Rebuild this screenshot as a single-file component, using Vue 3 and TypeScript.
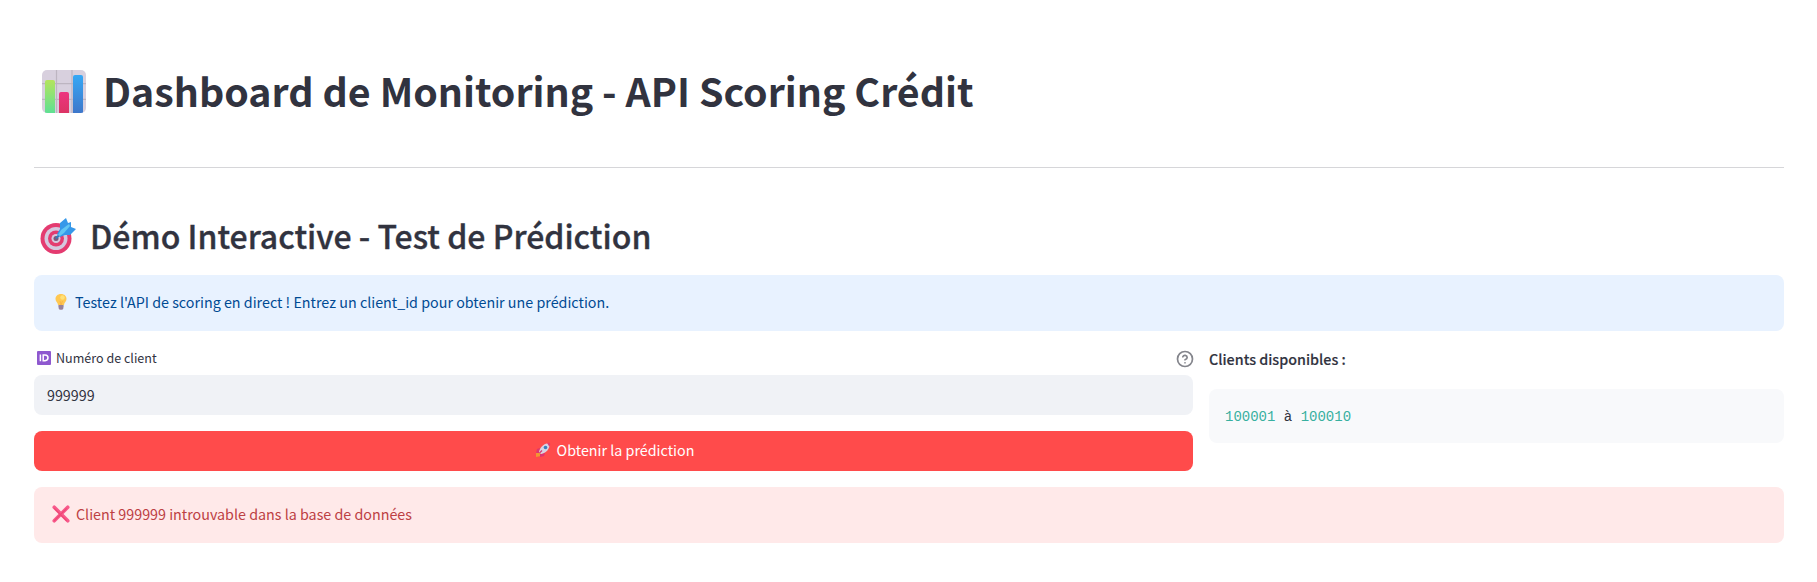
<script setup lang="ts">
import { ref } from 'vue'

const clientId = ref<string>('999999')
const submittedId = ref<string>('999999')
const firstClient = 100001
const lastClient = 100010

function predict(): void {
  submittedId.value = clientId.value
}
</script>

<template>
  <main class="page">
    <h1 class="title">
      <svg class="icon-chart" viewBox="0 0 44 44" aria-hidden="true">
        <defs>
          <linearGradient id="green" x2="0" y2="1"><stop stop-color="#b4e45d" /><stop offset="1" stop-color="#5fe093" /></linearGradient>
          <linearGradient id="pink" x2="0" y2="1"><stop stop-color="#ed3580" /><stop offset="1" stop-color="#dc3465" /></linearGradient>
          <linearGradient id="blue" x2="0" y2="1"><stop stop-color="#36a8f5" /><stop offset="1" stop-color="#3e77ca" /></linearGradient>
          <clipPath id="board"><rect width="44" height="43" rx="5" /></clipPath>
        </defs>
        <g clip-path="url(#board)">
          <rect width="44" height="43" fill="#d8d0de" />
          <path d="M14.5 0V43M30 0V43M0 13.7H44M0 29.3H44" stroke="#bdb5c1" stroke-width="1.2" />
          <path d="M3 43V12Q3 10 5 10H11Q13 10 13 12V43Z" fill="url(#green)" />
          <path d="M17 43V24Q17 22 19 22H25Q27 22 27 24V43Z" fill="url(#pink)" />
          <path d="M31 43V7Q31 5 33 5H39Q41 5 41 7V43Z" fill="url(#blue)" />
        </g>
      </svg>
      <span>Dashboard de Monitoring - API Scoring Crédit</span>
    </h1>
    <hr class="divider" />
    <h2 class="subtitle">
      <svg class="icon-target" viewBox="0 0 36 36" aria-hidden="true">
        <circle cx="16" cy="20.5" r="15.5" fill="#e43b70" />
        <circle cx="16" cy="20.5" r="11.5" fill="#d5c8df" />
        <circle cx="16" cy="20.5" r="8" fill="#e43b70" />
        <circle cx="16" cy="20.5" r="4.5" fill="#d5c8df" />
        <circle cx="16" cy="20.5" r="2.5" fill="#7c5779" />
        <path d="M16 20.5L23 13" stroke="#3479b8" stroke-width="2" />
        <path d="M17 16L20 11L20 5L26 0L28 5L31 4L31 9L36 11L30 17L25 17L20 19Z" fill="#3698e9" />
        <path d="M18 17L21 12L29 6L30 8L24 15L20 18Z" fill="#61c6f3" />
      </svg>
      <span>Démo Interactive - Test de Prédiction</span>
    </h2>

    <section class="alert info">
      <svg class="icon-bulb" viewBox="0 0 16 18" aria-hidden="true">
        <path d="M5.5 11H10.5V15Q10.5 17 8 17Q5.5 17 5.5 15Z" fill="#aa91ab" />
        <path d="M5.5 13H10.5M6 15H10" stroke="#75677d" stroke-width=".7" />
        <path d="M8 1C4.5 1 2.5 3.2 2.5 6C2.5 8.5 4.8 9.5 5 12H11C11.2 9.5 13.5 8.5 13.5 6C13.5 3.2 11.5 1 8 1Z" fill="#ffc852" />
        <path d="M7 8L8 12L9.5 8" fill="none" stroke="#f6ad45" stroke-width=".7" />
        <circle cx="9.5" cy="4.5" r="2.2" fill="#ffe178" />
      </svg>
      <span>Testez l'API de scoring en direct ! Entrez un client_id pour obtenir une prédiction.</span>
    </section>

    <div class="columns">
      <form class="client-form" @submit.prevent="predict">
        <div class="label-row">
          <svg class="icon-id" viewBox="0 0 14 14" aria-hidden="true">
            <rect width="14" height="14" rx="1" fill="#8e58cf" />
            <path d="M3.4 3.4V10.2M6.2 4V9.8H8.1Q11 9.3 11 6.8Q11 4 8.1 4Z" fill="none" stroke="#fff" stroke-width="1.5" />
          </svg>
          <label for="client">Numéro de client</label>
          <svg class="icon-help" viewBox="0 0 24 24" aria-hidden="true">
            <circle cx="12" cy="12" r="10" />
            <path d="M9.1 9a3 3 0 0 1 5.8 1c0 2-2.9 3-2.9 3M12 17h.01" />
          </svg>
        </div>
        <input id="client" v-model="clientId" class="client-input" autocomplete="off" />
        <button class="predict-button" type="submit">
          <svg class="icon-rocket" viewBox="0 0 16 16" aria-hidden="true">
            <path d="M3 9L1 11L1 15L6 14L8 12Z" fill="#f19731" />
            <path d="M5 6L2 7L1 11L4 11ZM9 11L10 11L9 14L5 15L5 12Z" fill="#df356f" />
            <path d="M4 10C5 5 9 1 15 1C15 7 11 11 6 12Z" fill="#d8d3e3" />
            <path d="M12 1Q14 .5 15 1Q15.5 3 14.5 5Z" fill="#e33c70" />
            <circle cx="10.5" cy="5.5" r="1.8" fill="#397fbe" />
            <path d="M4.5 11L7 8.5" stroke="#d53b75" stroke-width="1.2" />
          </svg>
          <span>Obtenir la prédiction</span>
        </button>
      </form>
      <aside class="available">
        <p>Clients disponibles :</p>
        <pre><code><span class="number">{{ firstClient }}</span> à <span class="number">{{ lastClient }}</span></code></pre>
      </aside>
    </div>

    <section class="alert error">
      <svg class="icon-cross" viewBox="0 0 16 16" aria-hidden="true">
        <path d="M2 2L14 14M14 2L2 14" fill="none" stroke="#f8598b" stroke-width="3.2" stroke-linecap="round" />
        <path d="M2 3L13 14M13 3L2 14" fill="none" stroke="#ee4874" stroke-width="1" />
      </svg>
      <span>Client {{ submittedId }} introuvable dans la base de données</span>
    </section>
  </main>
</template>

<style>
body {
  margin: 0;
  background: #fff;
}
</style>

<style scoped>
* { box-sizing: border-box; }
.page {
  height: 582px;
  padding: 59px 33px 0 34px;
  color: #31333f;
  font: 14.3px/24px "Noto Sans CJK SC", "Noto Sans", sans-serif;
}
svg { display: block; flex: none; }
span, label { white-space: nowrap; }
.title, .subtitle { display: flex; margin: 0; }
.title {
  height: 68px;
  font-size: 39.35px;
  font-weight: 700;
  line-height: 62px;
}
.icon-chart { width: 44px; height: 44px; margin: 11px 17px 0 8px; }
.divider { height: 1px; margin: 40px 0 48px; border: 0; background: #d6d6d9; }
.subtitle {
  height: 44px;
  font-size: 32px;
  font-weight: 500;
  line-height: 39px;
  -webkit-text-stroke: 0.35px #31333f;
}
.icon-target { width: 36px; height: 36px; margin: 2px 14px 0 6px; }
.alert {
  display: flex;
  height: 56px;
  padding: 16px;
  border-radius: 8px;
  line-height: 22px;
}
.info { margin-top: 15px; background: #e8f2ff; color: #004a93; }
.icon-bulb { width: 16px; height: 18px; margin: 2px 6px 0 3px; }
.columns {
  display: grid;
  grid-template-columns: 1159px 575px;
  gap: 16px;
  height: 124px;
  margin: 16px 0;
}
.client-form { display: flex; flex-direction: column; }
.label-row {
  display: flex;
  height: 28px;
  padding-left: 3px;
  font-size: 12.55px;
  line-height: 22px;
}
.icon-id { width: 14px; height: 14px; margin: 4px 5px 0 0; }
.icon-help {
  width: 18px;
  height: 18px;
  margin: 3px -1px 0 auto;
  fill: none;
  stroke: #84858c;
  stroke-width: 2.3;
  stroke-linecap: round;
  stroke-linejoin: round;
}
.client-input {
  width: 100%;
  height: 40px;
  padding: 0 13px 2px;
  border: 0;
  border-radius: 8px;
  outline: 0;
  background: #f0f2f6;
  color: inherit;
  font: inherit;
}
.predict-button {
  display: flex;
  align-items: center;
  justify-content: center;
  width: 100%;
  height: 40px;
  margin-top: 16px;
  padding: 0 0 2px 2px;
  border: 0;
  border-radius: 8px;
  background: #ff4b4b;
  color: #fff;
  font: inherit;
}
.icon-rocket { width: 16px; height: 16px; margin-right: 6px; }
.available p { height: 42px; margin: 0; font-weight: 500; -webkit-text-stroke: 0.15px #31333f; }
.available pre {
  height: 54px;
  margin: 0;
  padding: 17px 16px 15px;
  border-radius: 8px;
  background: #f8f9fb;
  font: 14px/22px "Liberation Mono", monospace;
}
code { font: inherit; }
.number { color: #38b0a0; }
.error { background: #ffe9e9; color: #bd4043; }
.icon-cross { width: 18px; height: 18px; margin: 2px 6px 0 2px; }
</style>
